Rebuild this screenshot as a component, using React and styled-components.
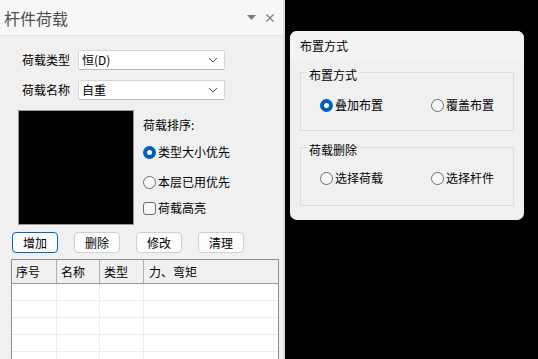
import React from 'react';
import styled, { createGlobalStyle } from 'styled-components';

const GlobalStyle = createGlobalStyle`
  html, body {
    margin: 0;
    padding: 0;
    background: #000;
  }
  body {
    font-family: "Noto Sans CJK SC", "Noto Sans", sans-serif;
    font-size: 12px;
    color: #000;
  }
`;

const Screen = styled.div`
  display: flex;
  width: 538px;
  height: 359px;
  overflow: hidden;
  background: #000;
`;

const Panel = styled.div`
  width: 283px;
  height: 359px;
  flex-shrink: 0;
  background: #f0f0f0;
  border-right: 2px solid #dcdcdc;
  display: flex;
  flex-direction: column;
`;

const TitleBar = styled.div`
  height: 35px;
  flex-shrink: 0;
  display: flex;
  align-items: center;
  padding: 0 9px 0 4px;
  background: #f7f7f7;
  border-bottom: 1px solid #e4e4e4;
`;

const Title = styled.div`
  flex: 1;
  font-size: 16px;
  color: #505050;
`;

const TitleIcons = styled.div`
  display: flex;
  align-items: center;
  gap: 10px;
`;

const Body = styled.div`
  display: flex;
  flex-direction: column;
  padding-top: 14px;
`;

const FieldRow = styled.div`
  display: flex;
  align-items: center;
  height: 20px;
  margin-bottom: ${p => p.$gap || 0}px;
  padding-left: 22px;
`;

const FieldLabel = styled.span`
  width: 56px;
  line-height: 20px;
`;

const Select = styled.div`
  width: 136px;
  height: 18px;
  display: flex;
  align-items: center;
  justify-content: space-between;
  padding: 0 6px 0 3px;
  background: #fff;
  border: 1px solid #d6d6d6;
  border-bottom-color: #b8b8b8;
  border-radius: 2px;
  line-height: 18px;
`;

const Middle = styled.div`
  display: flex;
  margin-top: 10px;
  padding-left: 18px;
`;

const Preview = styled.div`
  width: 116px;
  height: 115px;
  background: #000;
  border: 1px solid #9a9a9a;
  box-sizing: border-box;
`;

const Options = styled.div`
  display: flex;
  flex-direction: column;
  margin-left: 9px;
  padding-top: 6px;
`;

const OptionsTitle = styled.div`
  line-height: 18px;
  margin-bottom: 9px;
`;

const Choice = styled.label`
  display: flex;
  align-items: center;
  gap: 2px;
  line-height: 18px;
  height: 18px;
  margin-bottom: ${p => p.$gap || 0}px;
  white-space: nowrap;
`;

const RadioDot = styled.span`
  width: 13px;
  height: 13px;
  box-sizing: border-box;
  border-radius: 50%;
  flex-shrink: 0;
  border: ${p => (p.$on ? '4px solid #005fb8' : '1px solid #6e6e6e')};
  background: ${p => (p.$on ? '#fff' : '#f7f7f7')};
`;

const CheckBox = styled.span`
  width: 13px;
  height: 13px;
  box-sizing: border-box;
  border: 1px solid #6e6e6e;
  border-radius: 3px;
  background: #f7f7f7;
  flex-shrink: 0;
`;

const ButtonRow = styled.div`
  display: flex;
  gap: 16px;
  padding-left: 12px;
  margin-top: 7px;
`;

const Button = styled.div`
  width: 44px;
  height: 19px;
  display: flex;
  align-items: center;
  justify-content: center;
  background: #fdfdfd;
  border: 1px solid ${p => (p.$primary ? '#0067c0' : '#d0d0d0')};
  border-radius: 4px;
  line-height: 19px;
`;

const Table = styled.div`
  margin: 6px 0 0 11px;
  width: 266px;
  flex: 1;
  background: #fff;
  border: 1px solid #8e8e8e;
  border-bottom: none;
  display: grid;
  grid-template-columns: 45px 43px 44px 1fr;
  grid-auto-rows: 17px;
  grid-template-rows: 24px;
  align-content: start;
`;

const HeadCell = styled.div`
  background: #f0f0f0;
  border-bottom: 1px solid #9b9b9b;
  border-right: 1px solid #b0b0b0;
  padding-left: 4px;
  line-height: 24px;
  &:nth-child(4) {
    border-right: none;
    padding-left: 5px;
  }
`;

const Cell = styled.div`
  border-right: 1px solid #ececec;
  border-bottom: 1px solid #ececec;
  &:nth-child(4n) {
    border-right: none;
  }
`;

const Dialog = styled.div`
  margin: 31px 0 0 5px;
  width: 234px;
  height: 189px;
  background: #f0f0f0;
  border-radius: 7px;
  display: flex;
  flex-direction: column;
  overflow: hidden;
`;

const DialogTitle = styled.div`
  height: 29px;
  line-height: 30px;
  padding-left: 10px;
  background: #f3f3f3;
`;

const DialogBody = styled.div`
  display: flex;
  flex-direction: column;
  gap: 16px;
  padding: 12px 10px 0;
`;

const Group = styled.div`
  height: 57px;
  border: 1px solid #dcdcdc;
  display: flex;
  flex-direction: column;
`;

const GroupTitle = styled.div`
  align-self: flex-start;
  margin: -6px 0 0 6px;
  padding: 0 2px;
  line-height: 16px;
  background: #f0f0f0;
`;

const GroupChoices = styled.div`
  display: grid;
  grid-template-columns: 111px 1fr;
  padding-left: 19px;
  margin-top: ${p => p.$offset}px;
`;

const Chevron = () => (
  <svg width="10" height="6" viewBox="0 0 10 6">
    <path d="M1 1l4 4 4-4" fill="none" stroke="#555" strokeWidth="1" />
  </svg>
);

const Radio = ({ on, gap, children }) => (
  <Choice $gap={gap}>
    <RadioDot $on={on} />
    {children}
  </Choice>
);

const rows = Array.from({ length: 24 });

export default function App() {
  return (
    <>
      <GlobalStyle />
      <Screen>
        <Panel>
          <TitleBar>
            <Title>杆件荷载</Title>
            <TitleIcons>
              <svg width="9" height="5" viewBox="0 0 9 5">
                <path d="M0 0h9L4.5 5z" fill="#7a7a7a" />
              </svg>
              <svg width="8" height="8" viewBox="0 0 8 8">
                <path d="M0.5 0.5l7 7M7.5 0.5l-7 7" stroke="#7a7a7a" strokeWidth="1.2" />
              </svg>
            </TitleIcons>
          </TitleBar>
          <Body>
            <FieldRow $gap={10}>
              <FieldLabel>荷载类型</FieldLabel>
              <Select>
                <span>恒(D)</span>
                <Chevron />
              </Select>
            </FieldRow>
            <FieldRow>
              <FieldLabel>荷载名称</FieldLabel>
              <Select>
                <span>自重</span>
                <Chevron />
              </Select>
            </FieldRow>
            <Middle>
              <Preview />
              <Options>
                <OptionsTitle>荷载排序:</OptionsTitle>
                <Radio on gap={12}>类型大小优先</Radio>
                <Radio gap={8}>本层已用优先</Radio>
                <Choice>
                  <CheckBox />
                  荷载高亮
                </Choice>
              </Options>
            </Middle>
            <ButtonRow>
              <Button $primary>增加</Button>
              <Button>删除</Button>
              <Button>修改</Button>
              <Button>清理</Button>
            </ButtonRow>
          </Body>
          <Table>
            <HeadCell>序号</HeadCell>
            <HeadCell>名称</HeadCell>
            <HeadCell>类型</HeadCell>
            <HeadCell>力、弯矩</HeadCell>
            {rows.map((_, i) => (
              <Cell key={i} />
            ))}
          </Table>
        </Panel>
        <Dialog>
          <DialogTitle>布置方式</DialogTitle>
          <DialogBody>
            <Group>
              <GroupTitle>布置方式</GroupTitle>
              <GroupChoices $offset={13}>
                <Radio on>叠加布置</Radio>
                <Radio>覆盖布置</Radio>
              </GroupChoices>
            </Group>
            <Group>
              <GroupTitle>荷载删除</GroupTitle>
              <GroupChoices $offset={11}>
                <Radio>选择荷载</Radio>
                <Radio>选择杆件</Radio>
              </GroupChoices>
            </Group>
          </DialogBody>
        </Dialog>
      </Screen>
    </>
  );
}
